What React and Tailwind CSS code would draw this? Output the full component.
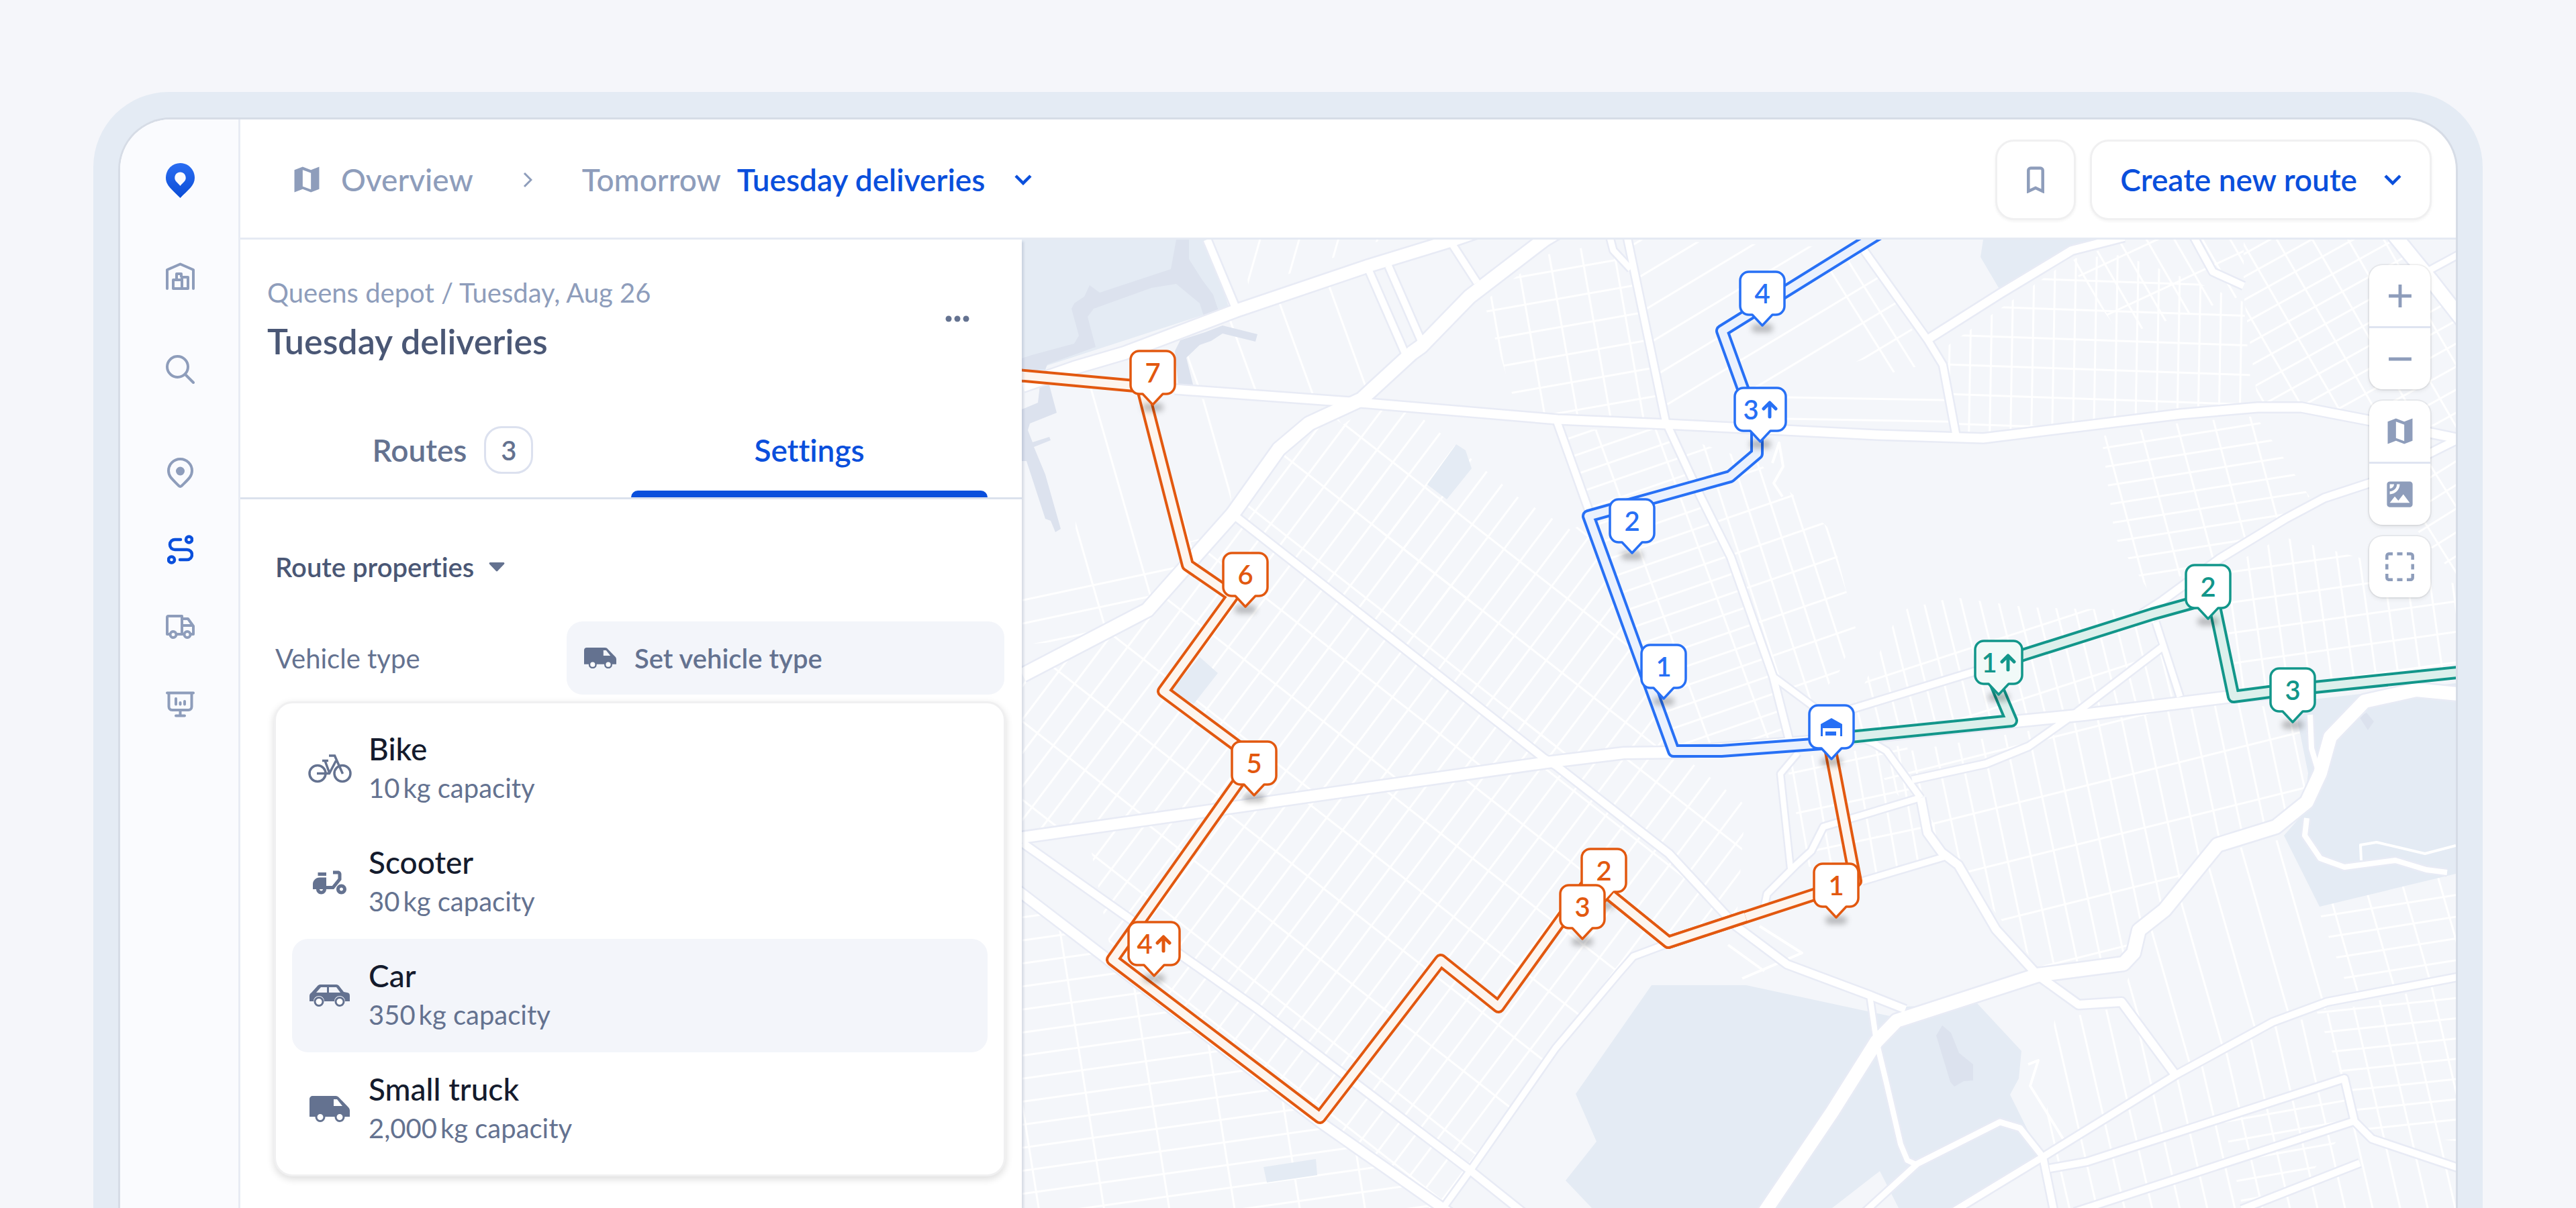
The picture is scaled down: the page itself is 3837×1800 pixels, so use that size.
import { useState } from 'react';
import { MdAdd, MdDeliveryDining, MdRemove, MdSatellite } from 'react-icons/md';

/* Icons */

const LogoIcon = () => (
  <svg width="43" height="52" viewBox="0 0 43 52">
    <defs>
      <linearGradient id="logo" x1="0" y1="0" x2="0" y2="1">
        <stop offset="0" stopColor="#2a6df2" />
        <stop offset="1" stopColor="#0b4dd6" />
      </linearGradient>
    </defs>
    <path
      fill="url(#logo)"
      fillRule="evenodd"
      d="M21.5 0C9.4 0 0 9.8 0 22c0 11.5 9.5 17.5 21.5 30C33.5 39.5 43 33.5 43 22 43 9.8 33.6 0 21.5 0zm0 13.5c5 0 8.2 3.7 8.2 8.5s-3.7 6.5-8.2 12c-4.5-5.5-8.2-7.2-8.2-12s3.2-8.5 8.2-8.5z"
    />
  </svg>
);

const WarehouseIcon = () => (
  <svg width="43" height="41" viewBox="0 0 43 41" fill="none" stroke="currentColor" strokeWidth="4" strokeLinecap="round" strokeLinejoin="round">
    <path d="M2 39V11l19.5-8.5L41 11v28" />
    <path d="M11 26h13v13H11zM16 26v-9h7v4M24 39h9V22h-9z" />
  </svg>
);

const SearchIcon = () => (
  <svg width="43" height="43" viewBox="0 0 43 43" fill="none" stroke="currentColor" strokeWidth="4" strokeLinecap="round">
    <circle cx="17.5" cy="17.5" r="15.5" />
    <path d="M29 29l12 12" />
  </svg>
);

const PinIcon = () => (
  <svg width="39" height="45" viewBox="0 0 39 45" fill="none" stroke="currentColor" strokeWidth="4" strokeLinejoin="round">
    <path d="M19.5 2C9.8 2 2 9.8 2 19.5c0 8.5 6 13 15.500 22.500a3 3 0 0 0 4 0C31 32.500 37 28 37 19.500 37 9.800 29.200 2 19.500 2z" />
    <circle cx="19.5" cy="20" r="6.5" fill="currentColor" stroke="none" />
  </svg>
);

const RouteIcon = () => (
  <svg width="39" height="44" viewBox="0 0 39 44" fill="none" stroke="currentColor" strokeWidth="4.5" strokeLinecap="round">
    <circle cx="32.5" cy="7" r="4.5" />
    <circle cx="6.5" cy="37" r="4.5" />
    <path d="M20 7h-8.5a7.5 7.5 0 0 0 0 15h18a7.5 7.5 0 0 1 0 15H19" />
  </svg>
);

const TruckOutlineIcon = () => (
  <svg width="43" height="36" viewBox="0 0 43 36" fill="none" stroke="currentColor" strokeWidth="4" strokeLinejoin="round">
    <path d="M6 29H2V4a2 2 0 0 1 2-2h20v27h-8M24 6h9l8 11v12h-4M24 16h16M24 29h3" />
    <circle cx="11" cy="29.5" r="4.5" />
    <circle cx="32" cy="29.5" r="4.5" />
  </svg>
);

const ReportIcon = () => (
  <svg width="43" height="39" viewBox="0 0 43 39" fill="none" stroke="currentColor" strokeWidth="4" strokeLinecap="round">
    <path d="M2 2.5h39M4.5 3v20a5 5 0 0 0 5 5h24a5 5 0 0 0 5-5V3M21.5 28v8M15 36.5h13M15 11v8.5M21.5 17v2.5M28 15v4.5" />
  </svg>
);

const MapIcon = () => (
  <svg width="38" height="39" viewBox="3 2.5 18 19" fill="currentColor">
    <path fillRule="evenodd" d="M3 5l6-2.2L15 5l6-2.2V19l-6 2.2L9 19l-6 2.2zM9 5v12l6 2.2V7.2z" />
  </svg>
);

const BookmarkIcon = () => (
  <svg width="26" height="40" viewBox="0 0 26 40" fill="none" stroke="currentColor" strokeWidth="4.5">
    <path d="M2.3 37V6a3.5 3.5 0 0 1 3.5-3.5h14.4A3.5 3.5 0 0 1 23.7 6v31L13 32z" />
  </svg>
);

const ChevronDown = () => (
  <svg width="26" height="16" viewBox="0 0 26 16" fill="none" stroke="currentColor" strokeWidth="4.5">
    <path d="M2 2l11 11L24 2" />
  </svg>
);

const ChevronRight = () => (
  <svg width="14" height="24" viewBox="0 0 14 24" fill="none" stroke="currentColor" strokeWidth="3">
    <path d="M2 2l10 10L2 22" />
  </svg>
);

const SelectAreaIcon = () => (
  <svg width="43" height="43" viewBox="0 0 43 43" fill="none" stroke="currentColor" strokeWidth="4.5">
    <path d="M2.3 11V5.3a3 3 0 0 1 3-3H11M32 2.3h5.700a3 3 0 0 1 3 3V11M40.700 32v5.700a3 3 0 0 1-3 3H32M11 40.700H5.300a3 3 0 0 1-3-3V32M17.500 2.300h8M17.500 40.700h8M2.300 17.500v8M40.700 17.500v8" />
  </svg>
);

const BikeIcon = () => (
  <svg width="65" height="43" viewBox="0 0 65 43" fill="none" stroke="currentColor" strokeWidth="3.5">
    <circle cx="14" cy="28.5" r="12" />
    <circle cx="51" cy="28.500" r="12" />
    <path d="M13 28.500h18.500l10-19M32 28.500L25 9.500M21 9.500h9M31 2h8.500l12 27" />
  </svg>
);

const CarIcon = () => (
  <svg width="60" height="33" viewBox="0 0 60 33">
    <path
      fill="currentColor"
      fillRule="evenodd"
      d="M16 0h24c2 0 3 1 4 2l7 9 5 1c3 .5 4 2 4 5v8h-7a8 8 0 0 0-16 0H22a8 8 0 0 0-16 0H0V17c0-2 1-4 3-5L12 2c1-1 2-2 4-2zm1 4l-7 8h16V4zm12 0v8h17l-6-8z"
    />
    <circle cx="14" cy="25.5" r="6" fill="#fff" stroke="currentColor" strokeWidth="3" />
    <circle cx="45" cy="25.5" r="6" fill="#fff" stroke="currentColor" strokeWidth="3" />
  </svg>
);

const VanIcon = ({ className }) => (
  <svg className={className} viewBox="0 0 60 39">
    <path
      fill="currentColor"
      fillRule="evenodd"
      d="M5 0h34c2 0 4 1 5.500 3L58 17c1.500 2 2 3 2 5v9h-7H0V5c0-3 2-5 5-5zm31 5v10h13l-8-10z"
    />
    <circle cx="16" cy="31.500" r="6" fill="#fff" stroke="currentColor" strokeWidth="3" />
    <circle cx="45" cy="31.500" r="6" fill="#fff" stroke="currentColor" strokeWidth="3" />
  </svg>
);

const DepotIcon = () => (
  <svg width="32" height="27" viewBox="0 0 32 27" fill="currentColor">
    <path d="M0 9l16-9 16 9v18h-3V15H3v12H0z" />
    <path d="M7 20h16v6H7z" />
  </svg>
);

const ArrowUp = () => (
  <svg width="24" height="28" viewBox="0 0 24 28" fill="none" stroke="currentColor" strokeWidth="5" strokeLinecap="round" strokeLinejoin="round">
    <path d="M12 25V4M3 13l9-9 9 9" />
  </svg>
);

/* Map data, in world pixels */

const ORIGIN = { x: 1522, y: 357 };

const parks = [
  '1522,357 1798,357 1830,457 1522,557',
  '2169,662 2183,671 2192,698 2155,744 2126,722',
  '1787,979 1814,1003 1778,1049 1744,1029',
  '2954,357 3135,357 3086,373 2980,434 2950,383',
  '1882,1739 1960,1727 1962,1751 1887,1762',
  '2460,1468 2601,1468 2815,1514 2838,1500 2945,1495 3011,1566 3007,1607 2994,1631 3040,1724 2917,1800 2828,1800 2800,1745 2729,1800 2371,1800 2332,1759 2378,1701 2347,1630',
  '3420,1045 3658,1018 3658,1302 3455,1351 3402,1245 3431,1212 3438,1152 3423,1078',
];

const water = [
  '1752,357 1771,357 1771,386 1790,416 1807,439 1816,466 1794,474 1787,452 1752,423 1715,429 1629,460 1620,472 1632,517 1560,543 1557,551 1522,554 1522,534 1537,529 1600,512 1607,500 1596,460 1600,452 1615,442 1623,425 1638,436 1744,401',
  '1821,485 1873,498 1870,509 1821,497 1804,508 1787,514 1767,533 1777,573 1755,573 1750,523 1758,507 1795,495',
  '1522,610 1546,600 1549,574 1563,574 1574,615 1534,631 1531,641 1538,659 1563,651 1565,656 1540,666 1557,707 1580,788 1572,793 1565,776 1557,773 1529,687 1522,687',
  '2893,1528 2906,1539 2918,1569 2939,1586 2939,1610 2925,1611 2911,1619 2905,1612 2884,1543',
  '3514,1068 3525,1062 3536,1075 3527,1088',
];

// each district is filled with one or two sets of parallel streets
const districts = [
  { area: '1950,631 1990,620 2330,1080 2304,1136 1523,1248 1523,1006 1709,909 1836,766 1905,669', sets: [[-53, 30], [38, 92]] },
  { area: '2040,605 2100,608 2260,740 2340,790 2371,773 2493,1119 2304,1136 2060,800 1990,640', sets: [[-53, 30], [38, 92]] },
  { area: '1620,1240 2304,1136 2500,1121 2600,1200 2586,1380 2433,1425 2317,1562 2148,1796 1966,1672 1657,1430', sets: [[-53, 30], [38, 86]] },
  { area: '1523,1332 2148,1800 1523,1800', sets: [[-8, 34], [81, 96]] },
  { area: '1610,560 1820,600 1836,766 1709,909 1640,950 1600,840', sets: [[74, 78]] },
  { area: '1523,880 1830,790 1709,909 1680,950 1523,960', sets: [[-12, 34]] },
  { area: '1841,463 2039,410 2094,529 2028,595 1780,575 1760,500', sets: [[70, 78]] },
  { area: '1850,357 2060,357 1860,430', sets: [[106, 56]] },
  { area: '2210,450 2300,380 2423,357 2481,628 2260,612', sets: [[80, 48], [-10, 42]] },
  { area: '2430,357 2773,370 2860,510 2500,620 2481,600', sets: [[-31, 46]] },
  { area: '2700,400 2773,375 2880,540 2800,560', sets: [[58, 30]] },
  { area: '2640,580 2890,580 2914,645 2640,635', sets: [[1, 32]] },
  { area: '2894,520 3086,385 3160,380 3270,420 3342,450 3355,600 3248,615 2954,650 2914,640', sets: [[91, 31], [2, 44]] },
  { area: '3170,357 3342,357 3342,440 3160,500 3080,390', sets: [[60, 36], [-25, 70]] },
  { area: '3342,440 3342,357 3572,357 3658,467 3658,640 3532,620 3428,600 3363,600', sets: [[60, 46], [-29, 30]] },
  { area: '2500,650 2620,690 2727,790 2765,940 2740,1000 2700,1050 2641,1008 2578,830', sets: [[72, 34], [-19, 54]] },
  { area: '2320,640 2481,640 2532,738 2578,830 2641,1008 2667,1105 2500,1112 2371,773', sets: [[-19, 27], [70, 84]] },
  { area: '3130,650 3248,630 3360,620 3440,740 3307,832 3200,880 3150,800', sets: [[75, 54], [-9, 28]] },
  { area: '2762,1050 2830,910 2910,890 3020,905 3200,910 3211,927 3247,1038 3100,1065 2762,1095', sets: [[76, 27], [-18, 96]] },
  { area: '3310,850 3400,800 3658,870 3658,1000 3380,1030 3327,1030', sets: [[82, 33], [-8, 45]] },
  { area: '3560,660 3658,660 3658,860 3600,790 3532,730', sets: [[58, 52], [-32, 30]] },
  { area: '2780,1130 3104,1075 3323,1045 3420,1060 3440,1150 3430,1210 3303,1259 3224,1356 3163,1430 3035,1440 2917,1289', sets: [[78, 35], [-14, 82]] },
  { area: '3186,1400 3303,1270 3402,1250 3455,1351 3658,1302 3658,1456 3385,1523 3242,1601 3160,1493', sets: [[74, 54]] },
  { area: '3455,1360 3658,1310 3658,1456 3500,1480', sets: [[-9, 32]] },
  { area: '3060,1520 3160,1500 3242,1604 3385,1530 3658,1462 3658,1800 3058,1800 3043,1724', sets: [[77, 40]] },
  { area: '3450,1505 3658,1462 3658,1700 3520,1690', sets: [[-6, 30]] },
  { area: '3310,1660 3500,1610 3505,1670 3400,1800 3340,1800', sets: [[-10, 30]] },
  { area: '2660,1130 2840,1110 2860,1190 2910,1280 2774,1313 2690,1290', sets: [[80, 32], [-12, 60]] },
];

const lanes = [
  '3517,1282 3516,1259 3540,1255 3612,1272 3658,1260',
  '3021,1586 3036,1580 3024,1618 3075,1700',
  '2621,1380 2684,1420 2595,1458',
  '2574,1408 2628,1447',
  '2640,690 2650,660 2656,695 2642,720 2655,740',
];

const roads = [
  { w: 18, points: '1523,575 1600,548 1675,526 1841,463 2039,396 2160,359 2230,335' },
  { w: 11, points: '1798,357 1841,460' },
  { w: 10, points: '2039,403 2094,529' },
  { w: 10, points: '2068,396 2117,508' },
  { w: 10, points: '2160,359 2200,421' },
  { w: 13, points: '1750,580 2025,600 2320,625 2481,632 2796,648 2954,653 3248,617 3363,607 3428,607 3532,627 3658,653' },
  { w: 20, points: '2345,330 2300,357 2189,442 2117,516 2103,526 2028,595 1950,631 1905,669 1836,766 1709,909 1523,1006' },
  { w: 9, points: '2397,350 2403,373 2429,401' },
  { w: 10, points: '2423,350 2481,628 2532,738 2578,830 2641,1008 2667,1110' },
  { w: 10, points: '2318,625 2371,773' },
  { w: 9, points: '2641,1008 2700,1052 2727,1080 2790,1107 2810,1119 2861,1189' },
  { w: 10, points: '2765,357 2871,506 2894,544 2914,651' },
  { w: 12, points: '2871,506 2980,437 3086,373 3164,353' },
  { w: 10, points: '3266,350 3296,405 3342,426' },
  { w: 20, points: '3566,350 3620,416 3670,480' },
  { w: 9, points: '3620,402 3670,375' },
  { w: 10, points: '2740,1062 2943,1000' },
  { w: 10, points: '2848,1162 2958,1138 3022,1112 3094,1061 3221,964' },
  { w: 11, points: '3190,915 3221,895 3307,832 3404,773 3462,742 3532,719 3670,650' },
  { w: 9, points: '3211,927 3247,1038' },
  { w: 16, points: '1515,1249 2304,1136 2419,1122 2500,1121 2760,1100 3002,1075 3104,1065 3323,1038 3400,1031' },
  { w: 11, points: '1836,766 2300,1130 2318,1141 2486,1272 2586,1380 2662,1437 2785,1483 2838,1504' },
  { w: 11, points: '1523,1256 1871,1502 2190,1744 2270,1808' },
  { w: 14, points: '1515,1326 1648,1428 1966,1672 2160,1808' },
  { w: 9, points: '2484,1406 2433,1425 2412,1449 2317,1562 2190,1744 2145,1806' },
  { w: 8, points: '2678,1122 2652,1153 2667,1294' },
  { w: 9, points: '2627,1356 2632,1332 2675,1289 2698,1268 2716,1232 2859,1189' },
  { w: 9, points: '2774,1313 2902,1275' },
  { w: 12, points: '2861,1189 2871,1241 2892,1270 2917,1289 2973,1385 3035,1453 3096,1497 3160,1493 3242,1604' },
  { w: 8, points: '2785,1483 2795,1552 2810,1614 2831,1705 2841,1729 2856,1736' },
  { w: 9, points: '2775,1808 2856,1734 2979,1672 3009,1681 3043,1724' },
  { w: 20, points: '2627,1808 2729,1657 2795,1552 2825,1521 3035,1453 3163,1436 3178,1420 3186,1386 3224,1356 3303,1259 3390,1232 3436,1195 3456,1152 3471,1098 3522,1045 3599,1028 3670,1035' },
  { w: 8, points: '3441,1065 3443,1115 3454,1152' },
  { w: 8, points: '3436,1219 3433,1245 3456,1279 3492,1292 3568,1282 3614,1296 3645,1300' },
  { w: 10, points: '2905,1808 3043,1724 3242,1601 3385,1523 3466,1493 3670,1454' },
  { w: 10, points: '3053,1741 3109,1731 3492,1607 3507,1671 3533,1697 3670,1743' },
  { w: 10, points: '3090,1806 3505,1671' },
  { w: 10, points: '3339,1802 3515,1733' },
  { w: 10, points: '3043,1724 3060,1808' },
];

const routes = [
  {
    stroke: '#e2580f',
    fill: '#fdf5ee',
    points: '1515,559 1701,576 1769,842 1836,888 1733,1030 1869,1131 1657,1430 1966,1665 2146,1431 2232,1500 2369,1310 2485,1404 2702,1333 2764,1313 2727,1120',
  },
  {
    stroke: '#2770f5',
    fill: '#eaf1fd',
    points: '2800,347 2565,493 2595,576 2617,634 2617,676 2577,710 2366,769 2493,1119 2564,1119 2727,1107',
  },
  {
    stroke: '#12968a',
    fill: '#dcf0ec',
    points: '2727,1101 2996,1074 2962,994 3013,976 3206,915 3296,890 3327,1038 3380,1031 3670,1001',
  },
];

const pins = [
  { id: 'o7', label: '7', x: 1717, y: 604, color: 'orange' },
  { id: 'o6', label: '6', x: 1855, y: 905, color: 'orange' },
  { id: 'o5', label: '5', x: 1868, y: 1186, color: 'orange' },
  { id: 'o4', label: '4', up: true, x: 1719, y: 1455, color: 'orange' },
  { id: 'o3', label: '3', x: 2357, y: 1400, color: 'orange' },
  { id: 'o1', label: '1', x: 2735, y: 1368, color: 'orange' },
  { id: 'b1', label: '1', x: 2478, y: 1042, color: 'blue' },
  { id: 'b2', label: '2', x: 2431, y: 825, color: 'blue' },
  { id: 'b3', label: '3', up: true, x: 2622, y: 659, color: 'blue' },
  { id: 'b4', label: '4', x: 2625, y: 486, color: 'blue' },
  { id: 'g1', label: '1', up: true, x: 2977, y: 1036, color: 'teal' },
  { id: 'g2', label: '2', x: 3289, y: 923, color: 'teal' },
  { id: 'g3', label: '3', x: 3415, y: 1077, color: 'teal' },
  { id: 'depot', x: 2728, y: 1132, color: 'blue' },
];

const pinColors = {
  orange: 'text-[#e2580f]',
  blue: 'text-[#2770f5]',
  teal: 'text-[#12968a]',
};

const pinWidth = (pin) => {
  if (!pin.up) return 70;
  return pin.label === '1' ? 74 : 80;
};

const Pin = ({ pin }) => {
  const w = pinWidth(pin);
  const c = w / 2;
  const shape = `M15 2H${w - 15}a13 13 0 0 1 13 13V53a13 13 0 0 1-13 13H${c + 15}L${c} 82L${c - 15} 66H15A13 13 0 0 1 2 53V15A13 13 0 0 1 15 2z`;

  return (
    <button
      className={`absolute h-[84px] ${pinColors[pin.color]}`}
      style={{ left: pin.x - ORIGIN.x - c, top: pin.y - ORIGIN.y - 83, width: w }}
      aria-label={pin.label ? `Stop ${pin.label}` : 'Depot'}
    >
      <span className="absolute inset-x-0 -bottom-2 mx-auto h-3 w-8 rounded-full bg-black/25 blur-[4px]" />
      <svg className="absolute inset-0" width={w} height="84" viewBox={`0 0 ${w} 84`}>
        <path d={shape} fill={pin.up && pin.color === 'teal' ? '#f1faf8' : '#fff'} stroke="currentColor" strokeWidth="3.5" strokeLinejoin="round" />
      </svg>
      <span className="relative flex h-[68px] items-center justify-center gap-1 text-[40px] leading-[48px] font-semibold">
        {pin.label || <DepotIcon />}
        {pin.up && <ArrowUp />}
      </span>
      <span className="block h-4" />
    </button>
  );
};

const RouteLine = ({ points, stroke, fill }) => (
  <g fill="none" strokeLinejoin="round">
    <polyline points={points} stroke={stroke} strokeWidth="20" />
    <polyline points={points} stroke={fill} strokeWidth="12" />
  </g>
);

const World = ({ children }) => (
  <svg className="absolute inset-0 h-full w-full">
    <g transform={`translate(${-ORIGIN.x} ${-ORIGIN.y})`}>{children}</g>
  </svg>
);

const BaseMap = () => (
  <World>
    <defs>
      {districts.map((d, i) =>
        d.sets.map(([angle, gap], j) => (
          <pattern
            key={`${i}-${j}`}
            id={`streets-${i}-${j}`}
            width="400"
            height={gap}
            patternUnits="userSpaceOnUse"
            patternTransform={`rotate(${angle})`}
          >
            <rect width="400" height="3" fill="#fff" />
          </pattern>
        ))
      )}
    </defs>
    {districts.map((d, i) =>
      d.sets.map((_, j) => <polygon key={`${i}-${j}`} points={d.area} fill={`url(#streets-${i}-${j})`} />)
    )}
    {parks.map((p) => <polygon key={p} points={p} fill="#e4ebf4" />)}
    {water.map((p) => <polygon key={p} points={p} fill="#dce2ee" />)}
    <g fill="none" stroke="#fff" strokeWidth="4" strokeLinejoin="round">
      {lanes.map((p) => <polyline key={p} points={p} />)}
    </g>
    <g fill="none" stroke="#e8ebf5" strokeLinejoin="round">
      {roads.map((r) => <polyline key={r.points} points={r.points} strokeWidth={r.w + 5} />)}
    </g>
    <g fill="none" stroke="#fff" strokeLinejoin="round">
      {roads.map((r) => <polyline key={r.points} points={r.points} strokeWidth={r.w} />)}
    </g>
  </World>
);

const MapControls = () => {
  const group = 'flex flex-col rounded-[20px] bg-white shadow-[0_0_0_2px_rgba(0,0,0,0.05),0_3px_6px_rgba(0,0,0,0.08)]';
  const control = 'flex h-[91px] w-[91px] items-center justify-center';

  return (
    <div className="absolute top-[38px] right-[38px] flex flex-col gap-[17px] text-[#8e9dbb]">
      <div className={group}>
        <button className={control} aria-label="Zoom in"><MdAdd size={58} /></button>
        <span className="h-[3px] bg-[#dfe4f1]" />
        <button className={control} aria-label="Zoom out"><MdRemove size={58} /></button>
      </div>
      <div className={group}>
        <button className={control} aria-label="Map view"><MapIcon /></button>
        <span className="h-[3px] bg-[#dfe4f1]" />
        <button className={control} aria-label="Satellite view"><MdSatellite size={51} /></button>
      </div>
      <div className={group}>
        <button className={control} aria-label="Select area"><SelectAreaIcon /></button>
      </div>
    </div>
  );
};

const RouteMap = () => (
  <main className="relative flex-1 overflow-hidden bg-[#f4f6fa]">
    <BaseMap />
    <World>
      {routes.map((r) => <RouteLine key={r.stroke} {...r} />)}
    </World>
    <Pin pin={{ id: 'o2', label: '2', x: 2389, y: 1346, color: 'orange' }} />
    {/* the leg that leaves stop 2 runs over its pin */}
    <World>
      <RouteLine points="2400,1335 2485,1404 2600,1366" stroke={routes[0].stroke} fill={routes[0].fill} />
    </World>
    {pins.map((p) => <Pin key={p.id} pin={p} />)}
    <MapControls />
  </main>
);

/* Sidebar and header */

const Sidebar = () => (
  <nav className="flex w-[179px] shrink-0 flex-col items-center border-r-[3px] border-[#e8ecf4] bg-[#fafbfe] pt-[59px] pl-[2px] text-[#8e9dbb]">
    <a href="#home" aria-label="Home" className="flex h-16 items-center"><LogoIcon /></a>
    <div className="mt-[78px] flex flex-col items-center gap-[75px]">
      <a href="#depots" aria-label="Depots" className="flex h-16 items-center"><WarehouseIcon /></a>
      <a href="#search" aria-label="Search" className="flex h-16 items-center"><SearchIcon /></a>
    </div>
    <div className="mt-[90px] flex flex-col items-center gap-[51px]">
      <a href="#places" aria-label="Places" className="flex h-16 items-center"><PinIcon /></a>
      <a href="#routes" aria-label="Routes" className="flex h-16 items-center text-[#0a4fdc]"><RouteIcon /></a>
      <a href="#vehicles" aria-label="Vehicles" className="flex h-16 items-center"><TruckOutlineIcon /></a>
      <a href="#reports" aria-label="Reports" className="flex h-16 items-center"><ReportIcon /></a>
    </div>
  </nav>
);

const Header = () => {
  const button = 'flex h-[120px] items-center rounded-[28px] border-[3px] border-[#f0f0f1] bg-white shadow-[0_2px_4px_rgba(0,0,0,0.05)]';

  return (
    <header className="flex h-[179px] shrink-0 items-center justify-between border-b-[3px] border-[#e5eaf3] pt-[3px] pr-9 pl-20 text-[46px] leading-[56px] font-medium">
      <div className="flex items-center text-[#8e9dbb]">
        <a href="#overview" className="flex items-center gap-8">
          <MapIcon />
          Overview
        </a>
        <span className="mx-[74px]"><ChevronRight /></span>
        <span>Tomorrow</span>
        <button className="ml-6 flex items-center gap-11 font-semibold text-[#0a4fdc]">
          Tuesday deliveries
          <ChevronDown />
        </button>
      </div>
      <div className="flex items-center gap-[21px]">
        <button className={`${button} w-[120px] justify-center text-[#8e9dbb]`} aria-label="Bookmark">
          <BookmarkIcon />
        </button>
        <button className={`${button} gap-10 px-[42px] font-semibold text-[#0a4fdc]`}>
          Create new route
          <ChevronDown />
        </button>
      </div>
    </header>
  );
};

/* Route panel */

const vehicles = [
  { id: 'bike', name: 'Bike', capacity: '10\u2009kg capacity', icon: <BikeIcon /> },
  { id: 'scooter', name: 'Scooter', capacity: '30\u2009kg capacity', icon: <MdDeliveryDining size={60} /> },
  { id: 'car', name: 'Car', capacity: '350\u2009kg capacity', icon: <CarIcon /> },
  { id: 'truck', name: 'Small truck', capacity: '2,000\u2009kg capacity', icon: <VanIcon className="w-[60px]" /> },
];

const VehicleMenu = ({ active, onSelect }) => (
  <div
    role="listbox"
    aria-label="Vehicle type"
    className="mt-[10px] mr-6 ml-[50px] rounded-[28px] border-[3px] border-[#f0f0f1] bg-white px-6 py-[13px] shadow-[0_4px_12px_rgba(0,0,0,0.14)]"
  >
    {vehicles.map((v) => (
      <button
        key={v.id}
        role="option"
        aria-selected={v.id === active}
        onClick={() => onSelect(v.id)}
        className={`flex h-[169px] w-full items-center gap-6 rounded-[24px] pl-[22px] text-left ${v.id === active ? 'bg-[#f3f5fa]' : ''}`}
      >
        <span className="flex w-[68px] justify-center text-[#647290]">{v.icon}</span>
        <span className="flex flex-col gap-2 pb-1">
          <span className="text-[46px] leading-[52px] font-medium text-[#141b2d]">{v.name}</span>
          <span className="text-[40px] leading-[48px] text-[#647290]">{v.capacity}</span>
        </span>
      </button>
    ))}
  </div>
);

const RoutePanel = () => {
  const [tab, setTab] = useState('settings');
  const [vehicle, setVehicle] = useState('car');

  const tabs = [
    { id: 'routes', label: 'Routes', count: 3 },
    { id: 'settings', label: 'Settings' },
  ];

  return (
    <section className="z-10 flex w-[1164px] shrink-0 flex-col bg-white shadow-[3px_3px_3px_rgba(100,114,144,0.2)]">
      <div className="flex items-center justify-between pt-[55px] pr-[78px] pl-10">
        <div>
          <p className="text-[40px] leading-[48px] text-[#8e9dbb]">Queens depot / Tuesday, Aug 26</p>
          <h1 className="mt-[18px] text-[52px] leading-[60px] font-semibold text-[#4a5775]">Tuesday deliveries</h1>
        </div>
        <button className="text-[#647290]" aria-label="More">
          <svg width="36" height="10" viewBox="0 0 36 10" fill="currentColor">
            <circle cx="5" cy="5" r="4.5" />
            <circle cx="18" cy="5" r="4.5" />
            <circle cx="31" cy="5" r="4.5" />
          </svg>
        </button>
      </div>

      <div role="tablist" className="mt-[62px] flex border-b-[3px] border-[#dbe1ed] px-[51px]">
        {tabs.map((t) => (
          <button
            key={t.id}
            role="tab"
            aria-selected={t.id === tab}
            onClick={() => setTab(t.id)}
            className={`relative flex h-[141px] flex-1 items-center justify-center gap-[26px] text-[46px] leading-[56px] font-semibold ${t.id === tab ? 'text-[#0a4fdc]' : 'text-[#647290]'}`}
          >
            {t.label}
            {t.count && (
              <span className="flex h-[71px] w-[73px] items-center justify-center rounded-[26px] border-[3px] border-[#dce1ef] text-[40px] leading-[48px]">
                {t.count}
              </span>
            )}
            {t.id === tab && <span className="absolute inset-x-0 bottom-0 h-[10px] rounded-t-[10px] bg-[#0a4fdc]" />}
          </button>
        ))}
      </div>

      <button className="mt-[77px] ml-[52px] flex items-center gap-[22px] self-start text-[40px] leading-[48px] font-semibold text-[#4a5775]">
        Route properties
        <svg width="24" height="14" viewBox="0 0 24 14" fill="#647290">
          <path d="M2 0h20a1.500 1.500 0 0 1 1 2.500L13 13a1.500 1.500 0 0 1-2 0L1 2.500A1.500 1.500 0 0 1 2 0z" />
        </svg>
      </button>

      <div className="mt-[57px] mr-[26px] ml-[52px] flex items-center justify-between text-[40px] leading-[48px] text-[#647290]">
        <label htmlFor="vehicle-type">Vehicle type</label>
        <button
          id="vehicle-type"
          aria-haspopup="listbox"
          aria-expanded="true"
          className="flex h-[109px] w-[652px] items-center gap-[27px] rounded-[24px] bg-[#f3f5fa] pl-[26px] font-semibold"
        >
          <VanIcon className="w-[48px]" />
          Set vehicle type
        </button>
      </div>

      <VehicleMenu active={vehicle} onSelect={setVehicle} />
    </section>
  );
};

export default function App() {
  return (
    <div className="flex h-screen flex-col overflow-hidden bg-[#f5f6fa] px-[139px] pt-[137px] font-[Lato,sans-serif] [font-variant-ligatures:none]">
      <div className="flex min-h-0 flex-1 rounded-t-[112px] bg-[#e4ebf4] px-[37px] pt-[38px]">
        <div className="flex min-w-0 flex-1 overflow-hidden rounded-t-[78px] border-x-[3px] border-t-[3px] border-[#d6dce6] bg-white">
          <Sidebar />
          <div className="flex min-w-0 flex-1 flex-col">
            <Header />
            <div className="flex min-h-0 flex-1">
              <RoutePanel />
              <RouteMap />
            </div>
          </div>
        </div>
      </div>
    </div>
  );
}
